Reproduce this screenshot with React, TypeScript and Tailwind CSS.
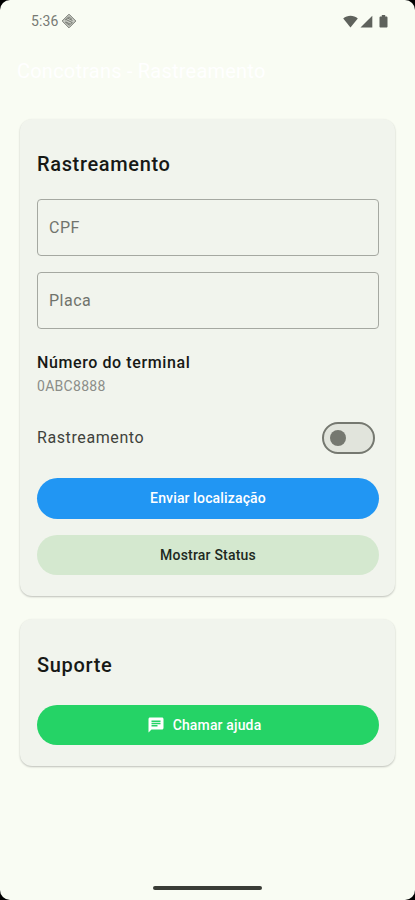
import { useState } from 'react';

function StatusBar() {
  return (
    <div className="flex h-[42px] items-center justify-between pl-[31px] pr-[27px] text-[#5f625c]">
      <div className="flex items-center gap-[3px] text-[14px] tracking-[0.1px] text-[#777a73]">
        <span>5:36</span>
        <svg width="16" height="16" viewBox="0 0 16 16" fill="none" stroke="currentColor">
          <path d="M8 1.2 14.8 8 8 14.8 1.2 8Z" fill="#c9ccc4" strokeWidth="1" strokeLinejoin="round" />
          <path d="M4 7.2 8 3.8l3 2.600M5 6.500l6.500 3.200M4 8.800l4.200 3.400 3-2.600M6.500 5l5 2.600M5 9l4 2" strokeWidth="1" />
        </svg>
      </div>
      <div className="flex items-center">
        <svg width="15" height="13" viewBox="0 0 15 13" fill="currentColor">
          <path d="M.2 3.6C4.3-.1 10.7-.1 14.8 3.6L7.5 12.5Z" />
        </svg>
        <svg className="ml-[2px]" width="13" height="13" viewBox="0 0 13 13" fill="currentColor">
          <path d="M12.3.7v11.8H.5Z" />
        </svg>
        <svg className="ml-[6px]" width="9" height="13" viewBox="0 0 9 13" fill="currentColor">
          <path d="M2.8 0h3.4v1.4h1.2c.6 0 1.1.5 1.1 1.1v9c0 .6-.5 1.1-1.1 1.1H1.6c-.6 0-1.1-.5-1.1-1.1v-9c0-.6.5-1.1 1.1-1.1h1.2Z" />
        </svg>
      </div>
    </div>
  );
}

function Field({ label }: { label: string }) {
  return (
    <input
      aria-label={label}
      placeholder={label}
      className="block h-[57px] w-full rounded-[4px] border border-[#a5a8a1] px-[11px] text-[16px] tracking-[0.5px] outline-none placeholder:text-[#70736c] placeholder:opacity-100"
    />
  );
}

export default function App() {
  const [tracking, setTracking] = useState(false);

  return (
    <div className="h-[900px] w-[415px] overflow-hidden bg-black font-['Roboto',sans-serif]">
      <div className="flex h-full flex-col rounded-[10px] bg-[#f9fcf3]">
        <StatusBar />

        {/* app bar */}
        <header className="flex h-[58px] items-center px-[17px]">
          <h1 className="whitespace-nowrap text-[20px] tracking-[0.22px] text-white">Concotrans - Rastreamento</h1>
        </header>

        <main className="flex flex-1 flex-col gap-[23px] px-5 pt-[19px]">
          {/* tracking card */}
          <section className="h-[477px] rounded-[12px] bg-[#f1f4ed] pt-[31px] pr-4 pl-[17px] shadow-[0_1px_2px_rgba(0,0,0,0.24)]">
            <h2 className="text-[20px] leading-[28px] font-medium tracking-[0.65px] text-[#171916]">Rastreamento</h2>
            <div className="mt-[21px] flex flex-col gap-[16px]">
              <Field label="CPF" />
              <Field label="Placa" />
            </div>

            <div className="mt-[23px] text-[16px] leading-[22px] font-medium tracking-[0.6px] text-[#171916]">Número do terminal</div>
            <div className="mt-[1px] text-[14px] leading-[22px] tracking-[0.3px] text-[#8b8d88]">0ABC8888</div>

            <div className="mt-[25px] flex h-[32px] items-center justify-between pr-1">
              <span className="text-[16px] tracking-[0.6px] text-[#3f423c]">Rastreamento</span>
              <button
                role="switch"
                aria-checked={tracking}
                aria-label="Rastreamento"
                onClick={() => setTracking(!tracking)}
                className={`flex h-[32px] w-[53px] items-center rounded-full border-2 border-[#757870] bg-[#e1e4dc] px-[6px] ${
                  tracking ? 'justify-end' : 'justify-start'
                }`}
              >
                <span className="size-4 rounded-full bg-[#757870]" />
              </button>
            </div>

            <button className="mt-[24px] block h-[41px] w-full rounded-full bg-[#2196f3] text-[14px] font-medium tracking-[0.15px] text-white">
              Enviar localização
            </button>
            <button className="mt-[16px] block h-[40px] w-full rounded-full bg-[#d4e8cf] text-[14px] font-medium tracking-[0.2px] text-[#20291e]">
              Mostrar Status
            </button>
          </section>

          {/* support card */}
          <section className="h-[147px] rounded-[12px] bg-[#f1f4ed] pt-[32px] pr-4 pl-[17px] shadow-[0_1px_2px_rgba(0,0,0,0.24)]">
            <h2 className="text-[20px] leading-[28px] font-medium tracking-[0.65px] text-[#171916]">Suporte</h2>
            <button className="mt-[26px] flex h-[40px] w-full items-center justify-center gap-2 rounded-full bg-[#25d366] pr-2 text-[14px] font-medium tracking-[0.15px] text-white">
              <svg width="18" height="18" viewBox="0 0 24 24" fill="currentColor">
                <path d="M20 2H4c-1.100 0-1.990.9-1.990 2L2 22l4-4h14c1.100 0 2-.9 2-2V4c0-1.100-.9-2-2-2zM6 9h12v2H6V9zm8 5H6v-2h8v2zm4-6H6V6h12v2z" />
              </svg>
              Chamar ajuda
            </button>
          </section>
        </main>

        {/* gesture bar */}
        <div className="mb-[10px] h-[4px] w-[109px] self-center rounded-full bg-[#3a3c36]" />
      </div>
    </div>
  );
}
